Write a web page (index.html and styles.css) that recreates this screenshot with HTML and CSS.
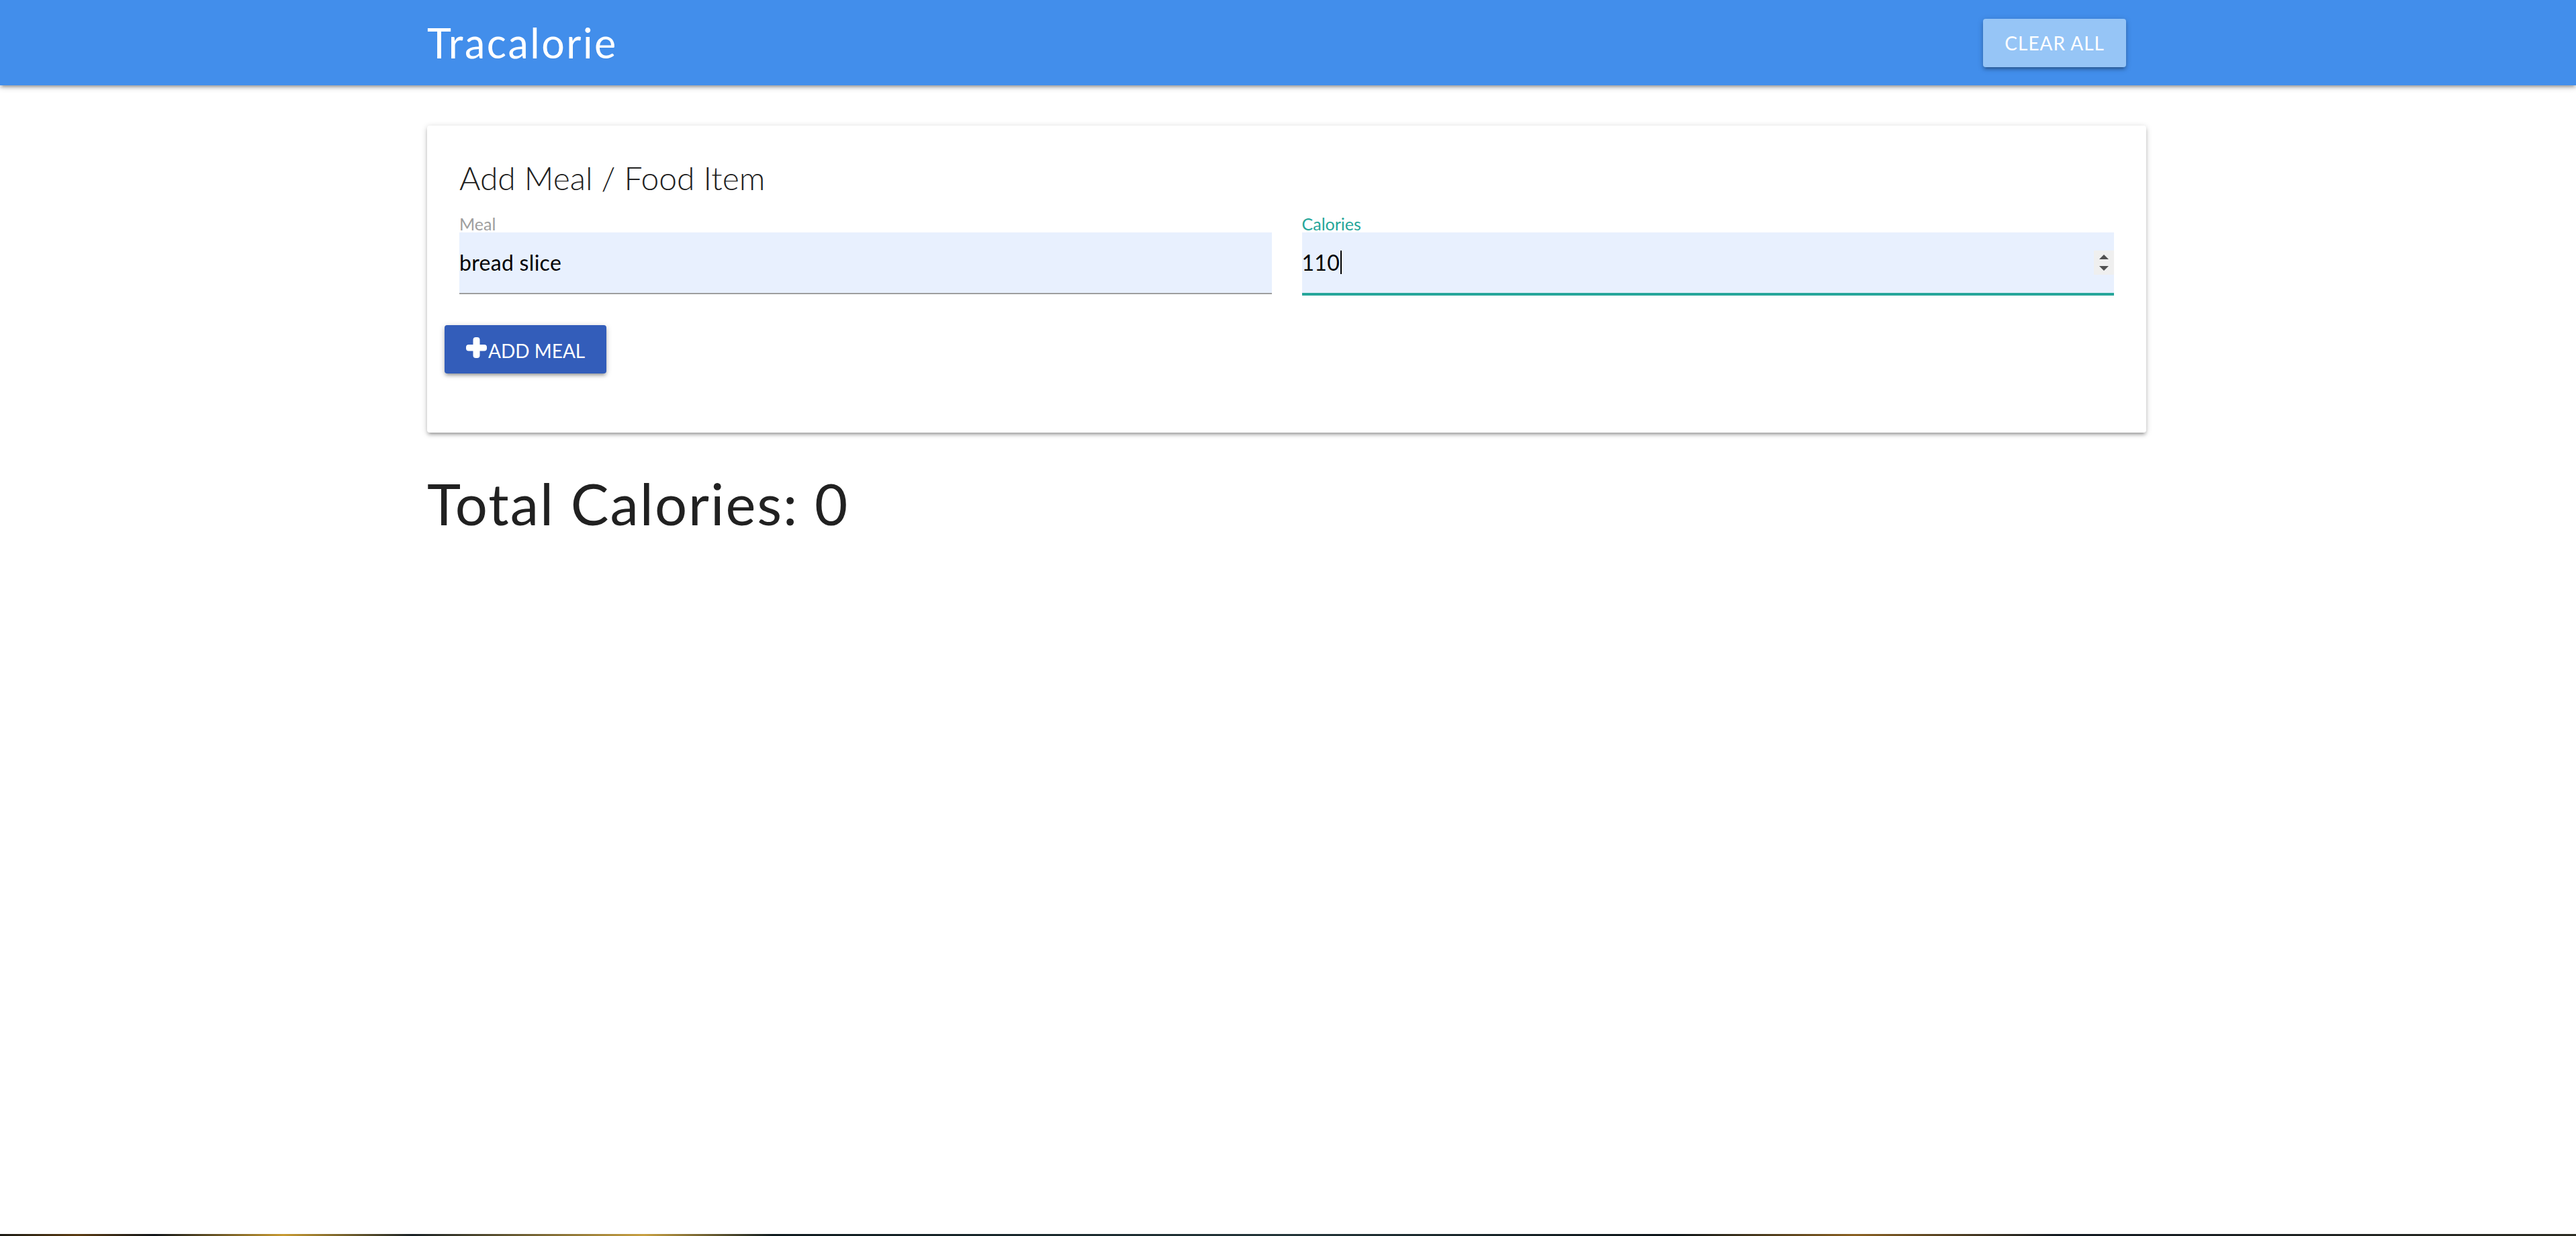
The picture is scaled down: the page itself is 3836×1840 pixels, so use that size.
FILE: index.html
```html
<!DOCTYPE html>
<html lang="en">
<head>
<meta charset="utf-8">
<title>Tracalorie</title>
<link rel="stylesheet" href="styles.css">
</head>
<body>
<nav class="topbar">
  <div class="nav-inner">
    <span class="brand">Tracalorie</span>
    <span class="btn btn-clear">CLEAR ALL</span>
  </div>
</nav>
<main class="container">
  <section class="card">
    <h2 class="card-title">Add Meal / Food Item</h2>
    <div class="fields">
      <div class="field">
        <label>Meal</label>
        <div class="field-input">bread slice</div>
      </div>
      <div class="field active">
        <label>Calories</label>
        <div class="field-input">110<span class="caret"></span>
          <span class="spinner">
            <svg width="30" height="36" viewBox="0 0 30 36"><polygon points="8,13 22,13 15,6" fill="#505050"/><polygon points="8,23 22,23 15,30" fill="#505050"/></svg>
          </span>
        </div>
      </div>
    </div>
    <span class="btn btn-add"><svg class="plus" width="31" height="31" viewBox="0 0 31 31"><rect x="10.5" y="0" width="10" height="31" rx="4" fill="#fff"/><rect x="0" y="11" width="31" height="9.5" rx="4" fill="#fff"/></svg>ADD MEAL</span>
  </section>
  <h1 class="total">Total Calories: 0</h1>
</main>
<div class="spacer"></div>
<div class="bottom-strip"></div>
</body>
</html>
```
FILE: styles.css
```css
html, body {
  height: 100%;
}
body {
  margin: 0;
  font-family: Lato, "Open Sans", sans-serif;
  background: #fff;
  display: flex;
  flex-direction: column;
  color: #212121;
}
.topbar {
  height: 127px;
  flex: none;
  background: #428eeb;
  box-shadow: 0 4px 4px 0 rgba(0,0,0,.14), 0 6px 2px -4px rgba(0,0,0,.12), 0 2px 10px 0 rgba(0,0,0,.2);
  position: relative;
  z-index: 2;
}
.nav-inner {
  margin-left: 636px;
  width: 2560px;
  box-sizing: border-box;
  padding-right: 30px;
  height: 100%;
  display: flex;
  align-items: center;
  justify-content: space-between;
}
.brand {
  font-size: 61px;
  font-weight: 400;
  letter-spacing: 2.5px;
  color: #fff;
}
.btn {
  height: 72px;
  display: inline-flex;
  align-items: center;
  font-size: 28px;
  color: #fff;
  border-radius: 4px;
  box-shadow: 0 4px 4px 0 rgba(0,0,0,.14), 0 6px 2px -4px rgba(0,0,0,.12), 0 2px 10px 0 rgba(0,0,0,.2);
  box-sizing: border-box;
}
.btn-clear {
  padding: 0 32px;
  letter-spacing: 1px;
  background: #96c5f6;
}
.container {
  flex: none;
  margin-left: 636px;
  width: 2560px;
}
.card {
  margin-top: 60px;
  background: #fff;
  border-radius: 4px;
  padding: 49px 48px 88px;
  box-shadow: 0 4px 4px 0 rgba(0,0,0,.14), 0 6px 2px -4px rgba(0,0,0,.12), 0 2px 10px 0 rgba(0,0,0,.2);
}
.card-title {
  margin: 0 0 27px;
  font-size: 48px;
  font-weight: 300;
  line-height: 1.2;
  color: #212121;
}
.fields {
  display: grid;
  grid-template-columns: 1fr 1fr;
  column-gap: 45px;
}
.field label {
  display: block;
  font-size: 25px;
  line-height: 25px;
  color: #9e9e9e;
}
.field-input {
  height: 90px;
  background: #e8f0fe;
  border-bottom: 2px solid #9e9e9e;
  display: flex;
  align-items: center;
  font-size: 32px;
  letter-spacing: 0.3px;
  color: #000;
}
.field.active label {
  color: #26a69a;
}
.field.active .field-input {
  border-bottom-color: #26a69a;
  box-shadow: 0 2px 0 0 #26a69a;
}
.caret {
  display: inline-block;
  width: 2px;
  height: 35px;
  margin-left: 1px;
  background: #000;
}
.spinner {
  margin-left: auto;
  width: 30px;
  height: 36px;
  background: #efefef;
  display: flex;
}
.btn-add {
  margin-top: 46px;
  margin-left: -22px;
  padding: 4px 32px 0;
  gap: 2px;
  background: #335dba;
}
.plus {
  display: block;
  margin-top: -9px;
}
.total {
  margin: 54px 0 0;
  font-size: 85px;
  font-weight: 400;
  letter-spacing: 2px;
  line-height: 1.2;
  color: #212121;
}
.spacer {
  flex: 1;
}
.bottom-strip {
  flex: none;
  height: 3px;
  background: linear-gradient(90deg, #1a1a14 0%, #5a3a10 3%, #101418 6%, #c89a30 11%, #182024 16%, #c8a040 25%, #0e1a1e 30%, #223438 50%, #0c1418 65%, #8a6020 72%, #101820 80%, #2a2a20 100%);
}
```
